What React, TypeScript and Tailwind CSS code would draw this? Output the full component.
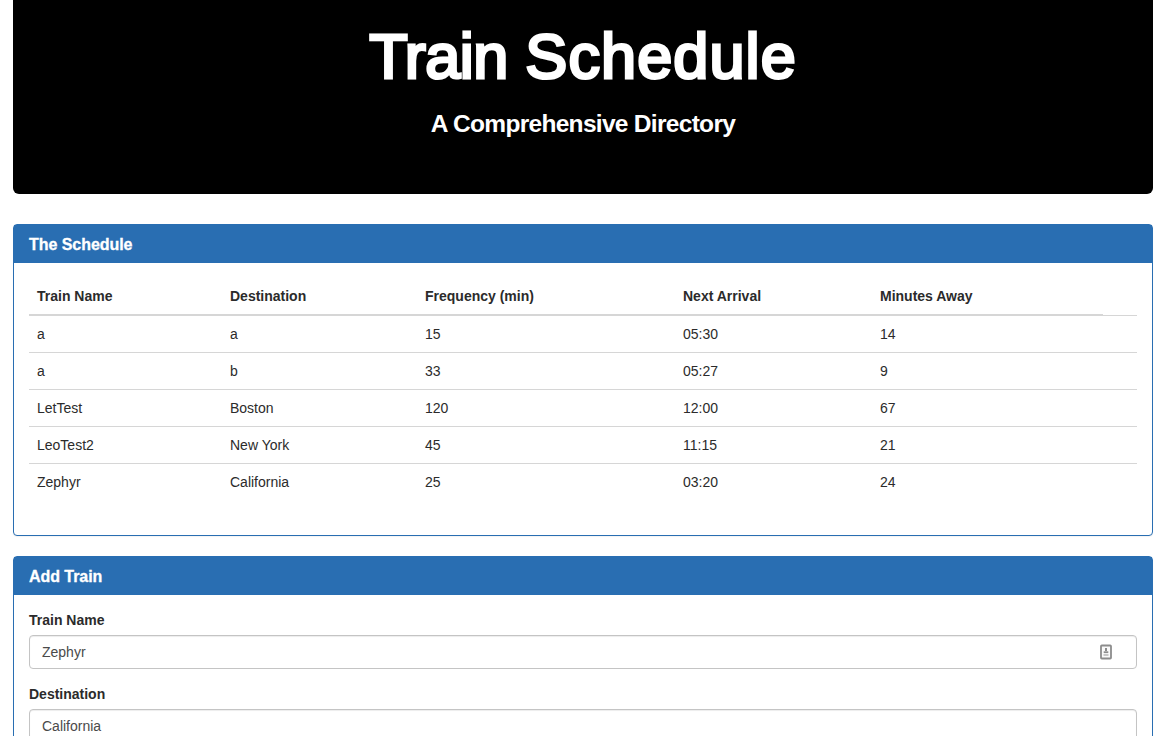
import type { ReactNode } from "react";

const columns = ["Train Name", "Destination", "Frequency (min)", "Next Arrival", "Minutes Away"];

const trains = [
  ["a", "a", "15", "05:30", "14"],
  ["a", "b", "33", "05:27", "9"],
  ["LetTest", "Boston", "120", "12:00", "67"],
  ["LeoTest2", "New York", "45", "11:15", "21"],
  ["Zephyr", "California", "25", "03:20", "24"],
];

function Panel({ title, children }: { title: string; children: ReactNode }) {
  return (
    <section className="mb-5 rounded-[4px] border border-[#296eb2] bg-white shadow-[0_1px_1px_rgba(0,0,0,0.05)]">
      <h3 className="h-[38px] bg-[#296eb2] px-[15px] pt-[11px] text-[16px] leading-[18px] font-bold tracking-[-0.05px] text-white [-webkit-text-stroke:0.3px_white]">
        {title}
      </h3>
      <div className="p-[15px]">{children}</div>
    </section>
  );
}

function ContactIcon() {
  return (
    <svg width="14" height="16" viewBox="0 0 14 16" className="mr-[23px] shrink-0" aria-hidden="true">
      <rect x="2" y="1.5" width="10" height="13" rx="0.8" fill="#fafafa" stroke="#8c8c8c" strokeWidth="1.8" />
      <path d="M7 4v3" stroke="#8c8c8c" strokeWidth="2" />
      <path d="M4.7 8.2h4.6" stroke="#8c8c8c" strokeWidth="1.8" />
      <path d="M4.5 11h5" stroke="#b0b0b0" strokeWidth="1.4" />
    </svg>
  );
}

function Field({ label, value, icon }: { label: string; value: string; icon?: boolean }) {
  return (
    <div className="mb-[15px]">
      <label className="mb-[5px] block text-[14px] leading-5 font-bold">{label}</label>
      <div className="flex h-[34px] items-center rounded-[4px] border border-[#c4c4c4] bg-white shadow-[inset_0_1px_1px_rgba(0,0,0,0.075)]">
        <input
          className="min-w-0 flex-1 px-3 text-[14px] leading-5 text-[#4a4a4a] outline-none"
          defaultValue={value}
        />
        {icon && <ContactIcon />}
      </div>
    </div>
  );
}

export default function App() {
  return (
    <div className="h-[736px] overflow-hidden bg-white pr-[23px] pl-[13px] font-['Liberation_Sans',Arial,sans-serif] text-[14px] leading-5 text-[#2b2b2b]">
      <header className="mb-[30px] h-[194px] rounded-b-[6px] bg-black pt-[22px] text-center text-white">
        <h1 className="text-[63px] leading-[69px] font-normal [-webkit-text-stroke:3px_white]">
          <span className="tracking-[-0.5px]">Train</span>{" "}
          <span className="tracking-[1.1px]">Schedule</span>
        </h1>
        <h2 className="mt-[19px] text-[24.5px] leading-[28px] font-bold tracking-[-0.7px]">
          A Comprehensive Directory
        </h2>
      </header>

      <Panel title="The Schedule">
        <table className="mb-5 w-full table-fixed border-separate border-spacing-0 text-left">
          <colgroup>
            <col className="w-[193px]" />
            <col className="w-[195px]" />
            <col className="w-[258px]" />
            <col className="w-[197px]" />
            <col className="w-[231px]" />
            <col />
          </colgroup>
          <thead>
            <tr className="h-[38px]">
              {columns.map((name) => (
                <th key={name} className="border-b-2 border-[#d6d6d6] px-2 py-0 font-bold">
                  {name}
                </th>
              ))}
              <th className="border-b border-[#d6d6d6] p-0" />
            </tr>
          </thead>
          <tbody className="[&>tr:last-child>td]:border-b-0">
            {trains.map((row, i) => (
              <tr key={i} className="h-[37px] last:h-[36px]">
                {row.map((cell, j) => (
                  <td key={j} className="border-b border-[#d6d6d6] px-2 py-0">
                    {cell}
                  </td>
                ))}
                <td className="border-b border-[#d6d6d6] p-0" />
              </tr>
            ))}
          </tbody>
        </table>
      </Panel>

      <Panel title="Add Train">
        <Field label="Train Name" value="Zephyr" icon />
        <Field label="Destination" value="California" />
      </Panel>
    </div>
  );
}
